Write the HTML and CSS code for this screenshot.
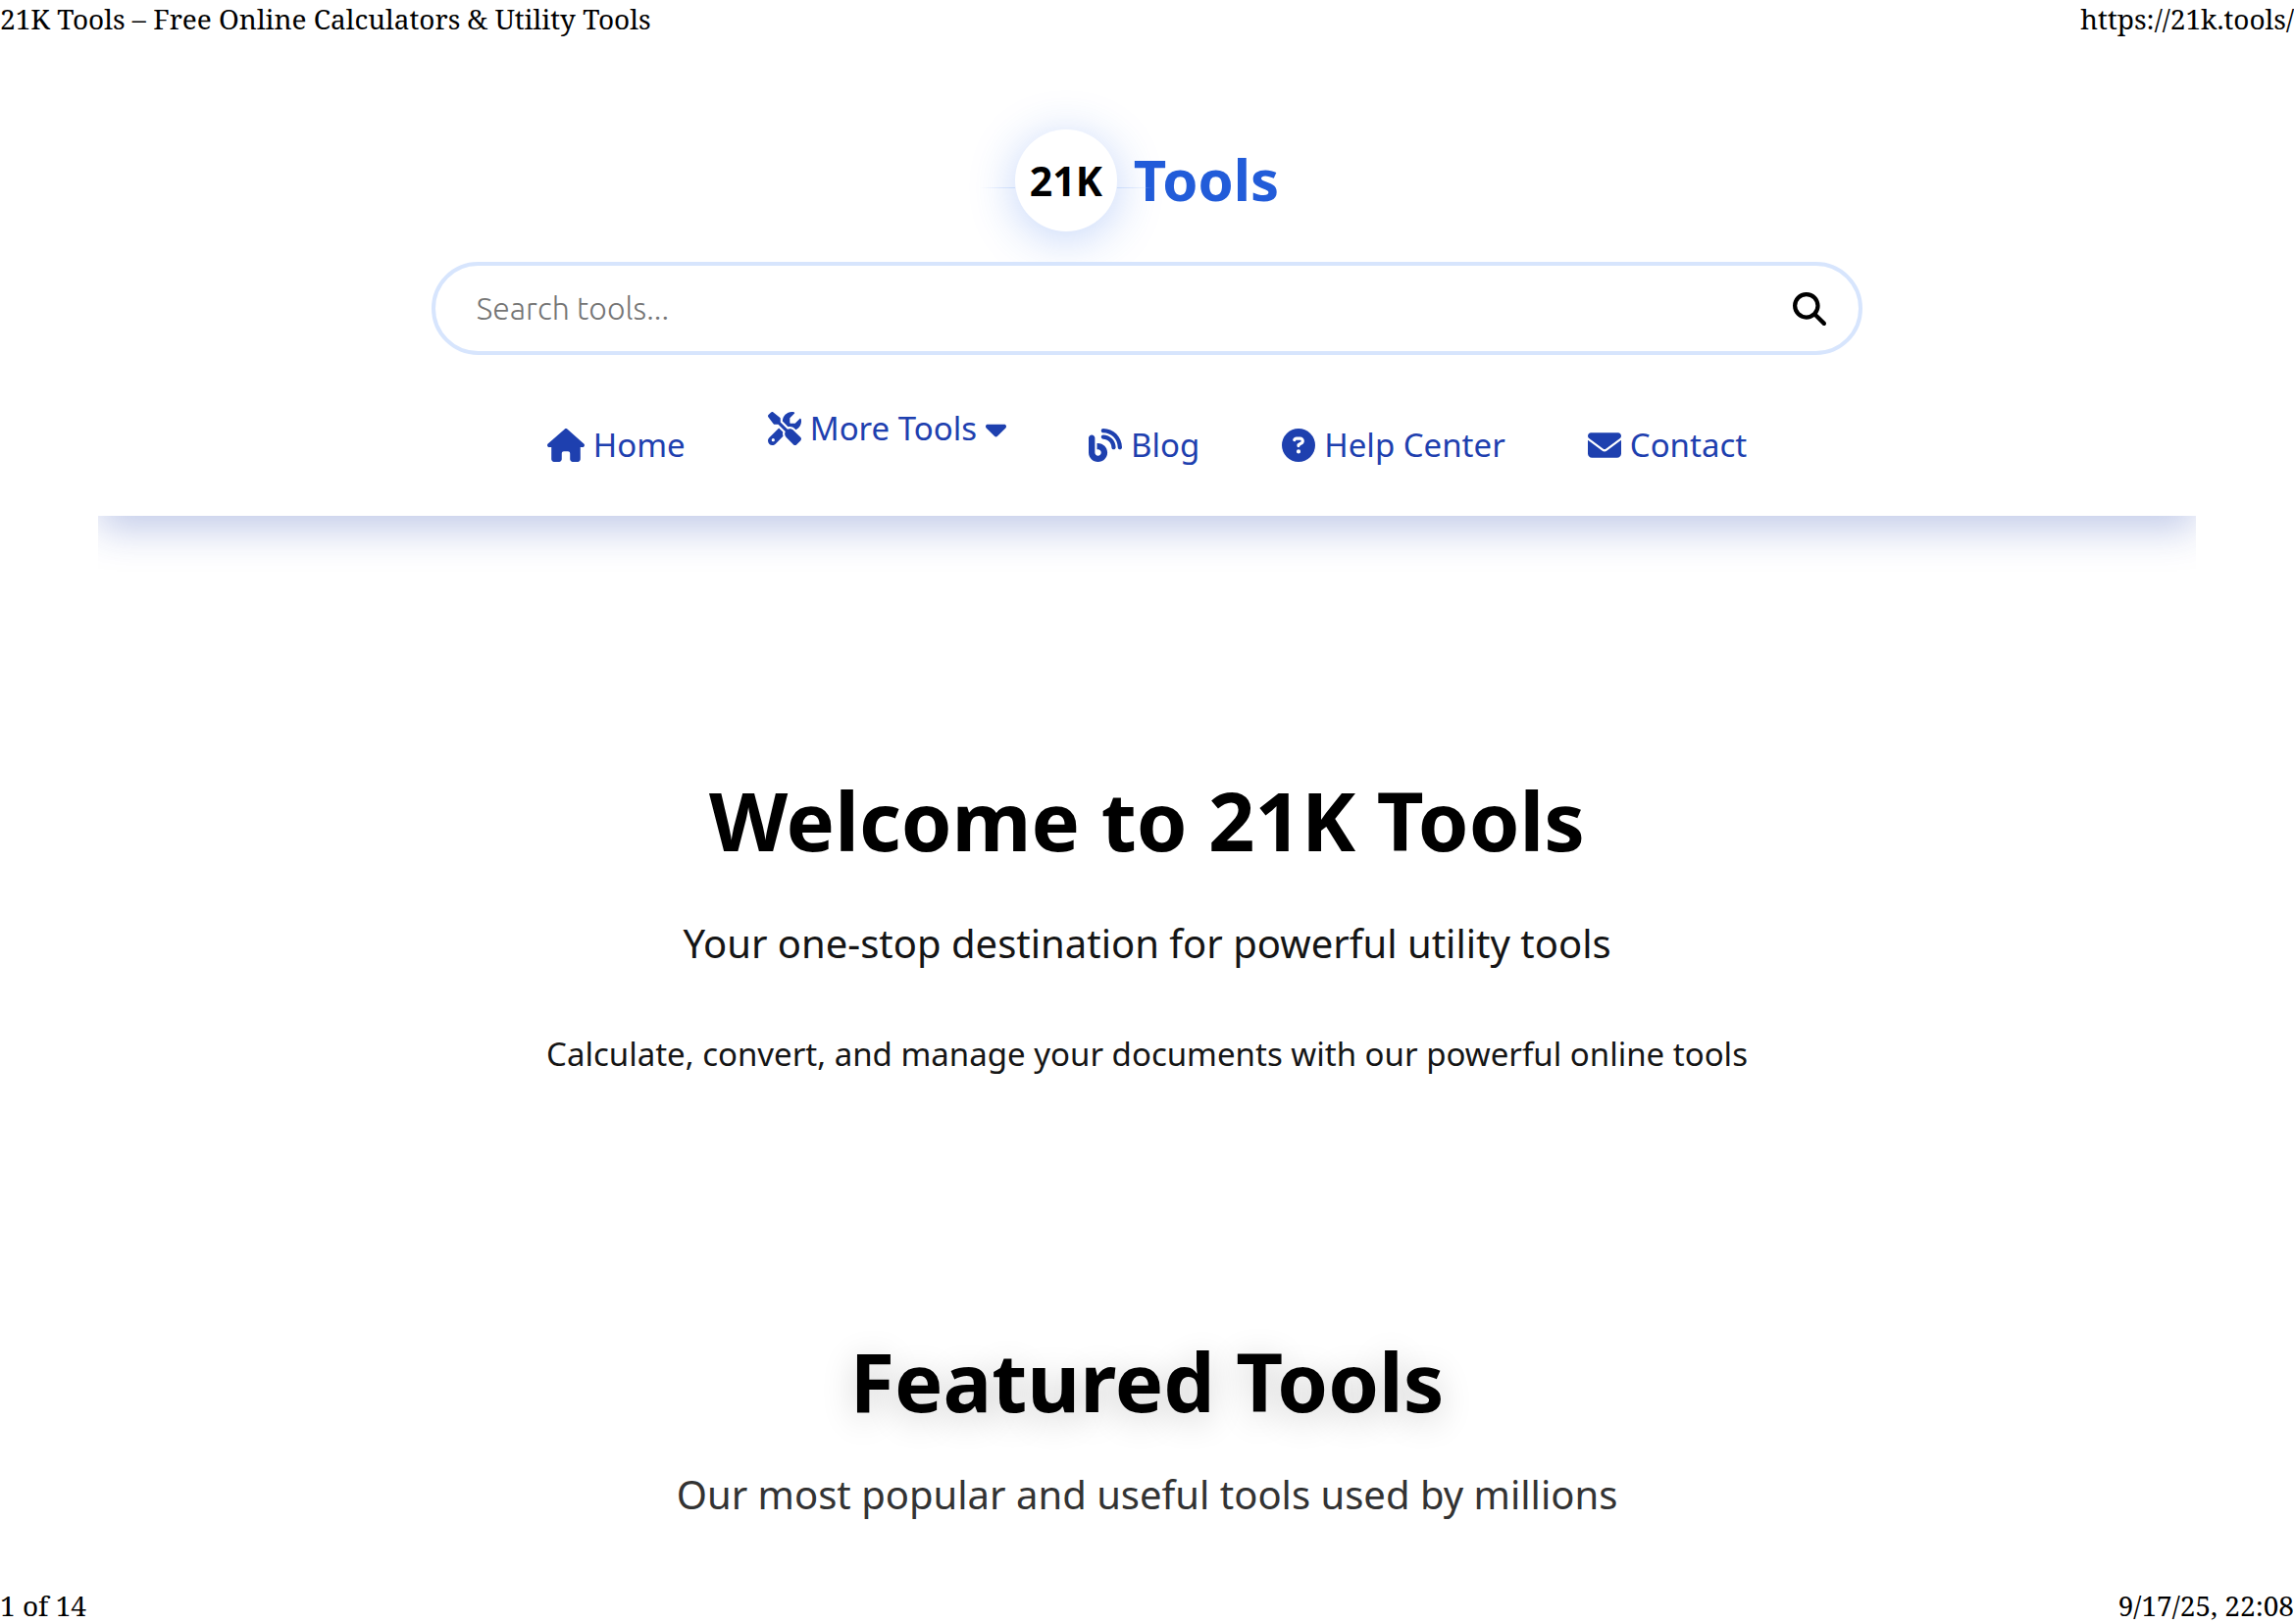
FILE: index.html
```html
<!DOCTYPE html>
<html lang="en">
<head>
<meta charset="utf-8">
<title>21K Tools – Free Online Calculators &amp; Utility Tools</title>
<link rel="stylesheet" href="styles.css">
</head>
<body>
<div class="sheet-line">
  <span>21K Tools – Free Online Calculators &amp; Utility Tools</span>
  <span>https://21k.tools/</span>
</div>

<header class="site-header">
  <a class="logo" href="#"><span class="logo-badge">21K</span><span class="logo-name">Tools</span></a>

  <form class="search">
    <input class="search-input" type="search" placeholder="Search tools..." aria-label="Search tools">
    <button class="search-button" type="submit" aria-label="Search">
      <svg class="icon" viewBox="0 0 512 512" aria-hidden="true"><path d="M416 208c0 45.9-14.9 88.3-40 122.7L502.6 457.4c12.5 12.5 12.5 32.8 0 45.3s-32.8 12.5-45.3 0L330.7 376c-34.4 25.2-76.8 40-122.7 40C93.1 416 0 322.9 0 208S93.1 0 208 0S416 93.1 416 208zM208 352a144 144 0 1 0 0-288 144 144 0 1 0 0 288z"/></svg>
    </button>
  </form>

  <nav class="nav">
    <a class="nav-link" href="#"><svg class="icon icon-wide" viewBox="0 0 576 512" aria-hidden="true"><path d="M575.8 255.5c0 18-15 32.1-32 32.1l-32 0 .7 160.2c0 2.7-.2 5.4-.5 8.1l0 16.2c0 22.1-17.9 40-40 40l-16 0c-1.1 0-2.2 0-3.3-.1c-1.4 .1-2.8 .1-4.2 .1L416 512l-24 0c-22.1 0-40-17.9-40-40l0-24 0-64c0-17.7-14.3-32-32-32l-64 0c-17.7 0-32 14.3-32 32l0 64 0 24c0 22.1-17.9 40-40 40l-24 0-31.9 0c-1.5 0-3-.1-4.5-.2c-1.2 .1-2.4 .2-3.6 .2l-16 0c-22.1 0-40-17.9-40-40l0-112c0-.9 0-1.9 .1-2.8l0-69.7-32 0c-18 0-32-14-32-32.1c0-9 3-17 10-24L266.4 8c7-7 15-8 22-8s15 2 21 7L564.8 231.5c8 7 12 15 11 24z"/></svg>Home</a>
    <div class="nav-menu">
      <a class="nav-link" href="#"><svg class="icon" viewBox="0 0 512 512" aria-hidden="true"><path d="M78.6 5C69.1-2.4 55.6-1.5 47 7L7 47c-8.5 8.5-9.4 22-2.1 31.6l80 104c4.5 5.9 11.6 9.4 19 9.4l54.1 0 109 109c-14.7 29-10 65.4 14.3 89.6l112 112c12.5 12.5 32.8 12.5 45.3 0l64-64c12.5-12.5 12.5-32.8 0-45.3l-112-112c-24.2-24.2-60.6-29-89.6-14.3l-109-109 0-54.1c0-7.5-3.5-14.5-9.4-19L78.6 5zM19.9 396.1C7.2 408.8 0 426.1 0 444.1C0 481.6 30.4 512 67.9 512c18 0 35.3-7.2 48-19.9L233.7 374.3c-7.8-20.9-9-43.6-3.6-65.1l-61.7-61.7L19.9 396.1zM512 144c0-10.5-1.1-20.7-3.2-30.5c-2.4-11.2-16.1-14.1-24.2-6l-63.9 63.9c-3 3-7.1 4.7-11.3 4.7L352 176c-8.8 0-16-7.2-16-16l0-57.4c0-4.2 1.7-8.3 4.7-11.3l63.9-63.9c8.1-8.1 5.2-21.8-6-24.2C388.7 1.1 378.5 0 368 0C288.5 0 224 64.5 224 144l0 .8 85.3 85.3c36-9.1 75.8 .5 104 28.7L429 274.5c49-23 83-72.8 83-130.5zM56 432a24 24 0 1 1 48 0 24 24 0 1 1 -48 0z"/></svg>More Tools<svg class="icon icon-caret" viewBox="0 0 320 512" aria-hidden="true"><path d="M137.4 374.6c12.5 12.5 32.8 12.5 45.3 0l128-128c9.2-9.2 11.9-22.9 6.9-34.9s-16.6-19.8-29.6-19.8L32 192c-12.9 0-24.6 7.8-29.6 19.8s-2.2 25.7 6.9 34.9l128 128z"/></svg></a>
    </div>
    <a class="nav-link" href="#"><svg class="icon" viewBox="0 0 512 512" aria-hidden="true"><path d="M192 32c0 17.7 14.3 32 32 32c123.7 0 224 100.3 224 224c0 17.7 14.3 32 32 32s32-14.3 32-32C512 128.9 383.1 0 224 0c-17.7 0-32 14.3-32 32zm0 96c0 17.7 14.3 32 32 32c70.7 0 128 57.3 128 128c0 17.7 14.3 32 32 32s32-14.3 32-32c0-106-86-192-192-192c-17.7 0-32 14.3-32 32zM96 144c0-26.5-21.5-48-48-48S0 117.5 0 144L0 368c0 79.5 64.5 144 144 144s144-64.5 144-144s-64.5-144-144-144l-16 0 0 96 16 0c26.5 0 48 21.5 48 48s-21.5 48-48 48s-48-21.5-48-48l0-224z"/></svg>Blog</a>
    <a class="nav-link" href="#"><svg class="icon" viewBox="0 0 512 512" aria-hidden="true"><path d="M256 512A256 256 0 1 0 256 0a256 256 0 1 0 0 512zM169.8 165.3c7.9-22.3 29.1-37.3 52.8-37.3l58.3 0c34.9 0 63.1 28.3 63.1 63.1c0 22.6-12.1 43.5-31.7 54.8L280 264.4c-.2 13-10.9 23.6-24 23.6c-13.3 0-24-10.7-24-24l0-13.5c0-8.6 4.6-16.5 12.1-20.8l44.3-25.4c4.7-2.7 7.6-7.7 7.6-13.1c0-8.4-6.8-15.1-15.1-15.1l-58.3 0c-3.4 0-6.4 2.1-7.5 5.3l-.4 1.2c-4.4 12.5-18.2 19-30.6 14.6s-19-18.2-14.6-30.6l.4-1.2zM224 352a32 32 0 1 1 64 0 32 32 0 1 1 -64 0z"/></svg>Help Center</a>
    <a class="nav-link" href="#"><svg class="icon" viewBox="0 0 512 512" aria-hidden="true"><path d="M48 64C21.5 64 0 85.5 0 112c0 15.1 7.1 29.3 19.2 38.4L236.8 313.6c11.4 8.5 27 8.5 38.4 0L492.8 150.4c12.1-9.1 19.2-23.3 19.2-38.4c0-26.5-21.5-48-48-48L48 64zM0 176L0 384c0 35.3 28.7 64 64 64l384 0c35.3 0 64-28.7 64-64l0-208L294.4 339.2c-22.8 17.1-54 17.1-76.8 0L0 176z"/></svg>Contact</a>
  </nav>
</header>

<main>
  <section class="hero">
    <h1 class="title">Welcome to 21K Tools</h1>
    <p class="lead">Your one-stop destination for powerful utility tools</p>
    <p class="note">Calculate, convert, and manage your documents with our powerful online tools</p>
  </section>
  <section class="featured">
    <h2 class="title title-shadow">Featured Tools</h2>
    <p class="lead lead-soft">Our most popular and useful tools used by millions</p>
  </section>
</main>

<div class="sheet-line sheet-foot">
  <span>1 of 14</span>
  <span>9/17/25, 22:08</span>
</div>
</body>
</html>
```
FILE: styles.css
```css
* {
  box-sizing: border-box;
}

body {
  margin: 0;
  min-height: 100vh;
  display: flex;
  flex-direction: column;
  background: #fff;
  color: #000;
  font-family: "Noto Sans", sans-serif;
}

h1, h2, p {
  margin: 0;
}

a {
  color: inherit;
  text-decoration: none;
}

.icon {
  width: 34px;
  height: 34px;
  flex: none;
  fill: currentColor;
}

.icon-wide {
  width: 38px;
}

.icon-caret {
  width: 21px;
}

.sheet-line {
  display: flex;
  justify-content: space-between;
  font: 28px/38px "Noto Serif", "Liberation Serif", serif;
}

.sheet-foot {
  margin-top: auto;
}

.site-header {
  margin: 0 100px;
  padding: 94px 56px 31px;
  display: flex;
  flex-direction: column;
  align-items: center;
  background: #fff;
  box-shadow: 0 14px 38px rgba(30, 64, 175, 0.27);
  clip-path: inset(0 0 -80px 0);
}

.logo {
  display: flex;
  align-items: center;
  gap: 17px;
  font-weight: 700;
}

.logo-badge {
  position: relative;
  width: 104px;
  height: 104px;
  display: grid;
  place-items: center;
  border-radius: 50%;
  background: #fff;
  box-shadow: 0 7px 48px rgba(37, 99, 235, 0.28);
  font-size: 41px;
  line-height: 56px;
}

/* faint flare on both sides of the badge */
.logo-badge::before,
.logo-badge::after {
  content: "";
  position: absolute;
  top: 59px;
  width: 36px;
  height: 1px;
}

.logo-badge::before {
  right: 100%;
  background: linear-gradient(to left, #c8dafa, transparent);
}

.logo-badge::after {
  left: 100%;
  background: linear-gradient(to right, #c8dafa, transparent);
}

.logo-name {
  color: #225cd9;
  font-size: 58px;
  line-height: 80px;
  padding-bottom: 2px;
}

.search {
  position: relative;
  width: 72%;
  height: 95px;
  margin-top: 31px;
  padding: 0 33px 0 42px;
  display: flex;
  align-items: center;
  border: 4px solid #d7e5fd;
  border-radius: 48px;
  background: #fff;
}

.search-input {
  flex: 1;
  min-width: 0;
  padding: 0 0 2px;
  border: 0;
  outline: 0;
  background: none;
  font: 300 32px/44px "Ubuntu", "Open Sans", sans-serif;
}

.search-input::placeholder {
  color: #757575;
}

.search-button {
  padding: 0;
  display: flex;
  border: 0;
  background: none;
  color: #000;
}

.nav {
  margin-top: 51px;
  display: flex;
  align-items: center;
  gap: 84px;
  color: #1e40af;
  font-size: 33px;
  line-height: 48px;
}

.nav-menu {
  padding-bottom: 34px;
}

.nav-link {
  display: flex;
  align-items: center;
  gap: 9px;
}

.hero {
  padding-top: 260px;
  text-align: center;
}

.featured {
  padding-top: 258px;
  text-align: center;
}

.title {
  font-size: 83px;
  line-height: 100px;
  font-weight: 700;
}

.title-shadow {
  text-shadow: 0 7px 35px rgba(0, 0, 0, 0.2);
}

.lead {
  margin-top: 46px;
  color: #151515;
  font-size: 40px;
  line-height: 60px;
}

.lead-soft {
  margin-top: 36px;
  color: #333;
}

.note {
  margin-top: 58px;
  color: #151515;
  font-size: 33px;
  line-height: 50px;
}
```
